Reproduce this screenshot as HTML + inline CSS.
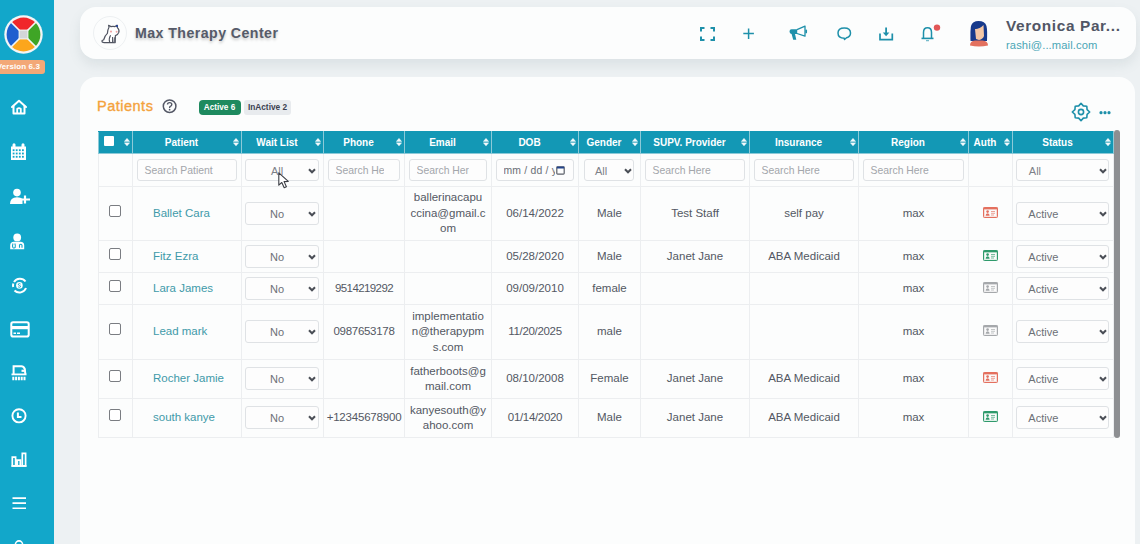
<!DOCTYPE html><html><head><meta charset="utf-8"><style>
*{box-sizing:border-box;margin:0;padding:0}
html,body{width:1140px;height:544px;overflow:hidden;background:#edf1f3;font-family:"Liberation Sans",sans-serif}
.a{position:absolute}
svg{position:absolute;overflow:visible}
#side{position:absolute;left:0;top:0;width:54px;height:544px;background:#12a7ca}
#hdr{position:absolute;left:80px;top:7px;width:1056px;height:52px;background:#fcfdfd;border-radius:16px;box-shadow:0 6px 12px rgba(100,120,130,0.13)}
#main{position:absolute;left:80px;top:76.5px;width:1055px;height:500px;background:#fcfdfd;border-radius:16px}
table{position:absolute;left:98px;top:131px;border-collapse:collapse;table-layout:fixed;width:1015px}
td,th{border:1px solid #eceef0;text-align:center;vertical-align:middle;font-size:11.5px;color:#535863;padding:0;line-height:15.5px}
th{background:#1398b5;color:#fff;font-weight:bold;font-size:10px;padding-right:11px;border-color:#8ccad8;border-top-color:#1398b5}
td.lk{color:#3f9aa9;text-align:left;padding-left:20px}
.inp{position:absolute;border:1px solid #dfe2e5;border-radius:3px;background:#fdfdfd;font-size:10.4px;color:#a3a6ab;line-height:22px;padding-left:6.5px;white-space:nowrap;overflow:hidden}
.sel{position:absolute;border:1px solid #dfe2e5;border-radius:3px;background:#fdfdfd;font-size:11px;color:#6c7077;line-height:21px;white-space:nowrap}
.cb{position:absolute;width:12px;height:12px;border:1.4px solid #7a7d82;border-radius:2px;background:#fff}
.txt{position:absolute;white-space:nowrap}
</style></head><body><div id="side"></div><div id="hdr"></div><div id="main"></div><svg style="left:4px;top:15px" width="39" height="39" viewBox="0 0 39 39">
<circle cx="19.5" cy="19.5" r="19.2" fill="#f2f5f6"/>
<path d="M19.5 19.5 L7.55 7.55 A16.9 16.9 0 0 1 31.45 7.55 Z" fill="#f0262a"/>
<path d="M19.5 19.5 L31.45 7.55 A16.9 16.9 0 0 1 31.45 31.45 Z" fill="#3fa526"/>
<path d="M19.5 19.5 L31.45 31.45 A16.9 16.9 0 0 1 7.55 31.45 Z" fill="#fca61c"/>
<path d="M19.5 19.5 L7.55 31.45 A16.9 16.9 0 0 1 7.55 7.55 Z" fill="#1f5fcf"/>
<path d="M7 7 L32 32 M32 7 L7 32" stroke="#f2f5f6" stroke-width="1.7"/>
<rect x="14.6" y="14.6" width="9.8" height="9.8" fill="#f2f5f6"/>
<rect x="15.6" y="15.6" width="7.8" height="7.8" fill="#d3d6d8"/>
</svg><div class="a" style="left:-6px;top:60px;width:51px;height:13.5px;background:#f3a877;border-radius:3px;color:#fff;font-weight:bold;font-size:8px;line-height:14px;text-align:right;padding-right:5px;letter-spacing:0.1px">Version 6.3</div><svg style="left:10px;top:99px" width="18" height="17" viewBox="0 0 18 17"><path d="M2 8 L9 1.8 L16 8" fill="none" stroke="#ffffff" stroke-width="2" stroke-linecap="round" stroke-linejoin="round"/><path d="M3.5 6.8 V14.5 H14.5 V6.8" fill="none" stroke="#ffffff" stroke-width="2" stroke-linejoin="round"/><path d="M7.2 14 V10 Q9 8.3 10.8 10 V14" fill="none" stroke="#ffffff" stroke-width="1.8"/></svg><svg style="left:10px;top:142px" width="17" height="19" viewBox="0 0 17 19"><path d="M1 4.5 H16 V18 H1 Z" fill="#ffffff"/><rect x="2.5" y="1.2" width="3" height="4.5" rx="1.5" fill="#ffffff"/><rect x="11.5" y="1.2" width="3" height="4.5" rx="1.5" fill="#ffffff"/><rect x="2.7" y="7.3" width="1.8" height="1.8" fill="#12a7ca"/><rect x="5.8" y="7.3" width="1.8" height="1.8" fill="#12a7ca"/><rect x="8.9" y="7.3" width="1.8" height="1.8" fill="#12a7ca"/><rect x="12.0" y="7.3" width="1.8" height="1.8" fill="#12a7ca"/><rect x="2.7" y="10.6" width="1.8" height="1.8" fill="#12a7ca"/><rect x="5.8" y="10.6" width="1.8" height="1.8" fill="#12a7ca"/><rect x="8.9" y="10.6" width="1.8" height="1.8" fill="#12a7ca"/><rect x="12.0" y="10.6" width="1.8" height="1.8" fill="#12a7ca"/><rect x="2.7" y="13.9" width="1.8" height="1.8" fill="#12a7ca"/><rect x="5.8" y="13.9" width="1.8" height="1.8" fill="#12a7ca"/><rect x="8.9" y="13.9" width="1.8" height="1.8" fill="#12a7ca"/><rect x="12.0" y="13.9" width="1.8" height="1.8" fill="#12a7ca"/></svg><svg style="left:9px;top:188px" width="23" height="17" viewBox="0 0 23 17"><circle cx="8" cy="4.6" r="3.8" fill="#ffffff"/><path d="M1 16 Q1 9.2 8 9.2 Q12 9.2 13.5 11 V16 Z" fill="#ffffff"/><path d="M16 7.5 V15.5 M12 11.5 H21" stroke="#ffffff" stroke-width="2.2"/></svg><svg style="left:9px;top:232px" width="17" height="18" viewBox="0 0 17 18"><circle cx="8.2" cy="5.4" r="3.9" fill="#ffffff"/><path d="M1.2 17.3 V13.5 Q1.2 9.8 5 9.8 H11.4 Q15.2 9.8 15.2 13.5 V17.3 Z" fill="#ffffff"/><path d="M4 11.5 Q3 14 4 15.6 Q5.2 16.6 6.2 15.4 Q6.8 13.6 5.8 11.5" fill="none" stroke="#12a7ca" stroke-width="1.1"/><path d="M10.5 15.8 V12.8 Q12.2 11.4 13 13.2 V15.8" fill="none" stroke="#12a7ca" stroke-width="1.1"/></svg><svg style="left:11px;top:277px" width="17" height="17" viewBox="0 0 17 17"><path d="M3 5 A7 7 0 0 1 14.5 4.5 M15 11 A7 7 0 0 1 3.5 13.5 M2.2 10 A7 7 0 0 1 2.3 6.5" fill="none" stroke="#ffffff" stroke-width="2"/><circle cx="8.4" cy="8.4" r="3.3" fill="#ffffff"/><path d="M9.6 7 Q8.3 6 7.3 7 Q7 8.2 8.4 8.4 Q9.9 8.7 9.5 9.8 Q8.5 10.8 7.1 9.8" fill="none" stroke="#12a7ca" stroke-width="0.9"/></svg><svg style="left:10px;top:321px" width="20" height="17" viewBox="0 0 20 17"><rect x="1.3" y="1.3" width="17.4" height="14.2" rx="1.8" fill="none" stroke="#ffffff" stroke-width="2"/><rect x="1.3" y="5" width="17.4" height="3.2" fill="#ffffff"/><rect x="3.5" y="11.5" width="2.5" height="1.5" fill="#ffffff"/><rect x="7" y="11.5" width="3" height="1.5" fill="#ffffff"/></svg><svg style="left:11px;top:364px" width="17" height="18" viewBox="0 0 17 18"><path d="M2.6 10 V2.3 H10.5 Q12.5 2.3 13.8 5 L14.3 10" fill="none" stroke="#ffffff" stroke-width="2"/><path d="M10.5 6.8 L13.5 6.8" stroke="#ffffff" stroke-width="2.2"/><rect x="0.5" y="9.5" width="15" height="1.8" fill="#ffffff"/><path d="M2.3 12.7 V16.2 M5.1 12.7 V16.2 M7.9 12.7 V16.2 M10.7 12.7 V16.2 M13.5 12.7 V16.2" stroke="#ffffff" stroke-width="2"/></svg><svg style="left:11px;top:408px" width="16" height="16" viewBox="0 0 16 16"><circle cx="8" cy="7.8" r="6.6" fill="none" stroke="#ffffff" stroke-width="1.9"/><path d="M6.9 4.6 V9 H10.5" fill="none" stroke="#ffffff" stroke-width="2"/></svg><svg style="left:11px;top:452px" width="16" height="15" viewBox="0 0 16 15"><path d="M1.3 5.2 H4.6 V13.8 H1.3 Z M6.3 8.2 H9.3 V13.8 H6.3 Z M11.3 1.3 H14.6 V13.8 H11.3 Z" fill="none" stroke="#ffffff" stroke-width="1.7"/><path d="M0.5 14 H15.5" stroke="#ffffff" stroke-width="1.7"/></svg><svg style="left:12px;top:496px" width="15" height="14" viewBox="0 0 15 14"><path d="M0.5 2.1 H14 M0.5 7.1 H14 M0.5 12.2 H14" stroke="#ffffff" stroke-width="1.6"/></svg><svg style="left:14px;top:539px" width="12" height="10" viewBox="0 0 12 10"><circle cx="5" cy="5.5" r="3.6" fill="none" stroke="#ffffff" stroke-width="1.6"/></svg><div class="a" style="left:93px;top:16px;width:34px;height:34px;border-radius:50%;border:1px solid #edf0f2;background:#fcfdfd"></div><svg style="left:100px;top:24px" width="21" height="21" viewBox="0 0 21 21">
<path d="M9 3.2 L8.6 1.3 L11 2.6 Q13 2.2 15 2.6 L17 1.2 L17.4 3.6 Q19.6 5.6 18.8 8.4 Q18 10.8 15.4 11.6 L15.2 18.6 L4.2 18.6 Q2 18.6 2 17.2 Q2 15.8 3.6 16 Q4.6 11.8 7.4 9.4 Q7.8 5.2 9 3.2 Z" fill="#fff" stroke="#505461" stroke-width="1.2" stroke-linejoin="round"/>
<path d="M9.8 18.6 Q8.4 14.6 10.6 11.2" fill="none" stroke="#505461" stroke-width="1.1"/>
<path d="M12.6 18.6 V13" fill="none" stroke="#505461" stroke-width="1.1"/>
<path d="M13.4 18.6 H15.2 V13 L14 13.4 Z" fill="#6b6f7a"/>
<circle cx="17" cy="2" r="1.1" fill="#1f3f9a"/>
<circle cx="11" cy="7.6" r="1.1" fill="#f2a7a7"/><circle cx="16.6" cy="7.8" r="1" fill="#f2a7a7"/>
</svg><div class="txt" style="left:135px;top:24px;font-size:14.2px;font-weight:bold;color:#565b69;letter-spacing:0.43px;text-shadow:0 2px 3px rgba(0,0,0,0.22);line-height:18px">Max Therapy Center</div><svg style="left:700px;top:27px" width="15" height="14" viewBox="0 0 15 14"><path d="M1 4.5 V1 H4.5 M10.5 1 H14 V4.5 M14 9.5 V13 H10.5 M4.5 13 H1 V9.5" fill="none" stroke="#1e90aa" stroke-width="2"/></svg><svg style="left:743px;top:27.5px" width="12" height="12" viewBox="0 0 12 12"><path d="M5.6 0.5 V11 M0.3 5.6 H10.9" fill="none" stroke="#1e90aa" stroke-width="1.5"/></svg><svg style="left:789px;top:25px" width="19" height="16" viewBox="0 0 19 16"><path d="M2.5 4.2 H8.2 V8.9 H6 L7.3 14.8 H4.2 L2.6 8.9 Q0.5 8.9 0.5 6.5 Q0.5 4.2 2.5 4.2 Z" fill="#1e90aa"/><path d="M8 4.6 L16 1.1 V11.2 L8 8.5" fill="none" stroke="#1e90aa" stroke-width="1.3" stroke-linejoin="round"/><path d="M17.2 5.4 V7.4" stroke="#1e90aa" stroke-width="1.7" stroke-linecap="round"/></svg><svg style="left:837px;top:27px" width="15" height="14" viewBox="0 0 15 14"><path d="M7.3 11.2 Q1 11.2 1 6 Q1 1 7.3 1 Q13.5 1 13.5 6 Q13.5 9.6 9.5 10.8 L7.5 12.5 Z" fill="none" stroke="#1e90aa" stroke-width="1.5" stroke-linejoin="round"/></svg><svg style="left:879px;top:27px" width="15" height="14" viewBox="0 0 15 14"><path d="M1 6.5 V12.7 H13.3 V6.5" fill="none" stroke="#1e90aa" stroke-width="1.7"/><path d="M7.1 0.5 V7" stroke="#1e90aa" stroke-width="1.8"/><path d="M3.8 5.5 L7.1 9.3 L10.4 5.5 Z" fill="#1e90aa"/></svg><svg style="left:921px;top:26px" width="20" height="16" viewBox="0 0 20 16"><path d="M2.5 12.2 V6.5 Q2.5 1.8 6.5 1.8 Q10.5 1.8 10.5 6.5 V12.2" fill="none" stroke="#1e90aa" stroke-width="1.5"/><path d="M0.5 12.4 H12.5" stroke="#1e90aa" stroke-width="1.6"/><path d="M5 14.6 H8" stroke="#1e90aa" stroke-width="1.3" opacity="0.6"/><circle cx="16" cy="1.6" r="3.2" fill="#e25757"/></svg><svg style="left:969px;top:20px" width="20" height="27" viewBox="0 0 20 27">
<path d="M1.5 21 Q1.2 10 2 6 Q3.5 1 9.5 1 Q16 1 17.5 6 Q18.5 11 18 21 Z" fill="#173a8c"/>
<path d="M6 9 Q11 9 14.5 5 L15 16 Q14 19 10 20 L7 19 Z" fill="#f3c7a6"/>
<path d="M2.5 10 Q7 9.5 13 5 L9 2.5 Q3 3 2.5 10Z" fill="#173a8c"/>
<path d="M1 25.5 Q1 21 6 20.5 L13.5 20.5 Q19 21 19 25.5 Q10 27.5 1 25.5 Z" fill="#e3715f"/>
</svg><div class="txt" style="left:1006px;top:16px;font-size:15.4px;font-weight:bold;color:#515665;letter-spacing:0.62px;line-height:19px">Veronica Par...</div><div class="txt" style="left:1006px;top:38px;font-size:11.2px;color:#4aa6b6;letter-spacing:0.1px;line-height:14px">rashi@...mail.com</div><div class="txt" style="left:97px;top:98px;font-size:14.5px;color:#f4a23c;letter-spacing:0.5px;line-height:16px;-webkit-text-stroke:0.35px #f4a23c">Patients</div><svg style="left:162px;top:99px" width="16" height="15" viewBox="0 0 16 15"><circle cx="7.6" cy="7.2" r="6.3" fill="none" stroke="#545866" stroke-width="1.5"/><path d="M5.5 5.6 Q5.5 3.6 7.6 3.6 Q9.8 3.6 9.8 5.5 Q9.8 6.8 8.3 7.4 Q7.6 7.8 7.6 8.9" fill="none" stroke="#545866" stroke-width="1.4"/><circle cx="7.6" cy="10.7" r="0.85" fill="#545866"/></svg><div class="a" style="left:198.5px;top:100px;width:42px;height:14.5px;background:#1e8a5f;border-radius:4px;color:#fff;font-weight:bold;font-size:8.2px;line-height:15.5px;text-align:center">Active 6</div><div class="a" style="left:244px;top:100px;width:47px;height:14.5px;background:#e8ebee;border-radius:3px;color:#3a3f50;font-weight:bold;font-size:8.3px;line-height:15.5px;text-align:center">InActive 2</div><svg style="left:1071px;top:102px" width="20" height="20" viewBox="0 0 20 20"><path d="M10 1.3 L12.3 3.9 L15.8 4.2 L16.1 7.7 L18.7 10 L16.1 12.3 L15.8 15.8 L12.3 16.1 L10 18.7 L7.7 16.1 L4.2 15.8 L3.9 12.3 L1.3 10 L3.9 7.7 L4.2 4.2 L7.7 3.9 Z" fill="none" stroke="#1e90aa" stroke-width="1.6" stroke-linejoin="round"/><circle cx="10" cy="10" r="2.6" fill="none" stroke="#1e90aa" stroke-width="1.6"/></svg><svg style="left:1099px;top:110px" width="13" height="5" viewBox="0 0 13 5"><circle cx="2" cy="2.7" r="1.6" fill="#1e90aa"/><circle cx="6" cy="2.7" r="1.6" fill="#1e90aa"/><circle cx="10" cy="2.7" r="1.6" fill="#1e90aa"/></svg><table><colgroup><col style="width:34px"><col style="width:109px"><col style="width:82px"><col style="width:81px"><col style="width:87px"><col style="width:87px"><col style="width:62px"><col style="width:109px"><col style="width:109px"><col style="width:110px"><col style="width:44px"><col style="width:101px"></colgroup><tr style="height:22px"><th></th><th>Patient</th><th>Wait List</th><th>Phone</th><th>Email</th><th>DOB</th><th>Gender</th><th>SUPV. Provider</th><th>Insurance</th><th>Region</th><th>Auth</th><th>Status</th></tr><tr style="height:33px"><td></td><td></td><td></td><td></td><td></td><td></td><td></td><td></td><td></td><td></td><td></td><td></td></tr><tr style="height:54px"><td></td><td class="lk">Ballet Cara</td><td></td><td></td><td>ballerinacapu<br>ccina@gmail.c<br>om</td><td>06/14/2022</td><td>Male</td><td>Test Staff</td><td>self pay</td><td>max</td><td></td><td></td></tr><tr style="height:32px"><td></td><td class="lk">Fitz Ezra</td><td></td><td></td><td></td><td>05/28/2020</td><td>Male</td><td>Janet Jane</td><td>ABA Medicaid</td><td>max</td><td></td><td></td></tr><tr style="height:32px"><td></td><td class="lk">Lara James</td><td></td><td><span style="letter-spacing:-0.6px">9514219292</span></td><td></td><td>09/09/2010</td><td>female</td><td></td><td></td><td>max</td><td></td><td></td></tr><tr style="height:55px"><td></td><td class="lk">Lead mark</td><td></td><td><span style="letter-spacing:-0.3px">0987653178</span></td><td>implementatio<br>n@therapypm<br>s.com</td><td><span style="letter-spacing:-0.33px">11/20/2025</span></td><td>male</td><td></td><td></td><td>max</td><td></td><td></td></tr><tr style="height:39px"><td></td><td class="lk">Rocher Jamie</td><td></td><td></td><td>fatherboots@g<br>mail.com</td><td>08/10/2008</td><td>Female</td><td>Janet Jane</td><td>ABA Medicaid</td><td>max</td><td></td><td></td></tr><tr style="height:39px"><td></td><td class="lk">south kanye</td><td></td><td><span style="letter-spacing:-0.2px">+12345678900</span></td><td>kanyesouth@y<br>ahoo.com</td><td><span style="letter-spacing:-0.33px">01/14/2020</span></td><td>Male</td><td>Janet Jane</td><td>ABA Medicaid</td><td>max</td><td></td><td></td></tr></table><div class="a" style="left:104px;top:135.5px;width:10px;height:10px;background:#fff;border-radius:1px"></div><svg style="left:124px;top:138.3px" width="6" height="8.5" viewBox="0 0 6 8.5"><path d="M0.2 3.5 L3 0.2 L5.8 3.5 Z M0.2 4.8 L3 8.1 L5.8 4.8 Z" fill="#fff" stroke="#fff" stroke-width="0.3" stroke-linejoin="round" opacity="0.95"/></svg><svg style="left:233px;top:138.3px" width="6" height="8.5" viewBox="0 0 6 8.5"><path d="M0.2 3.5 L3 0.2 L5.8 3.5 Z M0.2 4.8 L3 8.1 L5.8 4.8 Z" fill="#fff" stroke="#fff" stroke-width="0.3" stroke-linejoin="round" opacity="0.95"/></svg><svg style="left:315px;top:138.3px" width="6" height="8.5" viewBox="0 0 6 8.5"><path d="M0.2 3.5 L3 0.2 L5.8 3.5 Z M0.2 4.8 L3 8.1 L5.8 4.8 Z" fill="#fff" stroke="#fff" stroke-width="0.3" stroke-linejoin="round" opacity="0.95"/></svg><svg style="left:396px;top:138.3px" width="6" height="8.5" viewBox="0 0 6 8.5"><path d="M0.2 3.5 L3 0.2 L5.8 3.5 Z M0.2 4.8 L3 8.1 L5.8 4.8 Z" fill="#fff" stroke="#fff" stroke-width="0.3" stroke-linejoin="round" opacity="0.95"/></svg><svg style="left:483px;top:138.3px" width="6" height="8.5" viewBox="0 0 6 8.5"><path d="M0.2 3.5 L3 0.2 L5.8 3.5 Z M0.2 4.8 L3 8.1 L5.8 4.8 Z" fill="#fff" stroke="#fff" stroke-width="0.3" stroke-linejoin="round" opacity="0.95"/></svg><svg style="left:570px;top:138.3px" width="6" height="8.5" viewBox="0 0 6 8.5"><path d="M0.2 3.5 L3 0.2 L5.8 3.5 Z M0.2 4.8 L3 8.1 L5.8 4.8 Z" fill="#fff" stroke="#fff" stroke-width="0.3" stroke-linejoin="round" opacity="0.95"/></svg><svg style="left:632px;top:138.3px" width="6" height="8.5" viewBox="0 0 6 8.5"><path d="M0.2 3.5 L3 0.2 L5.8 3.5 Z M0.2 4.8 L3 8.1 L5.8 4.8 Z" fill="#fff" stroke="#fff" stroke-width="0.3" stroke-linejoin="round" opacity="0.95"/></svg><svg style="left:741px;top:138.3px" width="6" height="8.5" viewBox="0 0 6 8.5"><path d="M0.2 3.5 L3 0.2 L5.8 3.5 Z M0.2 4.8 L3 8.1 L5.8 4.8 Z" fill="#fff" stroke="#fff" stroke-width="0.3" stroke-linejoin="round" opacity="0.95"/></svg><svg style="left:850px;top:138.3px" width="6" height="8.5" viewBox="0 0 6 8.5"><path d="M0.2 3.5 L3 0.2 L5.8 3.5 Z M0.2 4.8 L3 8.1 L5.8 4.8 Z" fill="#fff" stroke="#fff" stroke-width="0.3" stroke-linejoin="round" opacity="0.95"/></svg><svg style="left:960px;top:138.3px" width="6" height="8.5" viewBox="0 0 6 8.5"><path d="M0.2 3.5 L3 0.2 L5.8 3.5 Z M0.2 4.8 L3 8.1 L5.8 4.8 Z" fill="#fff" stroke="#fff" stroke-width="0.3" stroke-linejoin="round" opacity="0.95"/></svg><svg style="left:1004px;top:138.3px" width="6" height="8.5" viewBox="0 0 6 8.5"><path d="M0.2 3.5 L3 0.2 L5.8 3.5 Z M0.2 4.8 L3 8.1 L5.8 4.8 Z" fill="#fff" stroke="#fff" stroke-width="0.3" stroke-linejoin="round" opacity="0.95"/></svg><svg style="left:1105px;top:138.3px" width="6" height="8.5" viewBox="0 0 6 8.5"><path d="M0.2 3.5 L3 0.2 L5.8 3.5 Z M0.2 4.8 L3 8.1 L5.8 4.8 Z" fill="#fff" stroke="#fff" stroke-width="0.3" stroke-linejoin="round" opacity="0.95"/></svg><div class="inp" style="left:137px;top:159px;width:99.5px;height:22px;">Search Patient</div><div class="sel" style="left:245.2px;top:159px;width:73.80000000000001px;height:22px"><div class="txt" style="left:0;width:61.80000000000001px;text-align:center;top:0.5px"><span style="color:#7d8188">All</span></div><svg style="left:62.30000000000001px;top:7.5px" width="8" height="6" viewBox="0 0 8 6"><path d="M1 1.2 L4 4.3 L7 1.2" fill="none" stroke="#4a4e56" stroke-width="2"/></svg></div><div class="inp" style="left:328px;top:159px;width:71.5px;height:22px;"><span style="display:inline-block;width:48.5px;overflow:hidden;vertical-align:top">Search Here</span></div><div class="inp" style="left:409px;top:159px;width:77.5px;height:22px;"><span style="display:inline-block;width:52.5px;overflow:hidden;vertical-align:top">Search Here</span></div><div class="inp" style="left:496px;top:159px;width:77.5px;height:22px;"><span style="color:#6a6e75;display:inline-block;width:51px;overflow:hidden;vertical-align:top;letter-spacing:0.2px">mm / dd / yyyy</span></div><div class="sel" style="left:583.9px;top:159px;width:50.30000000000007px;height:22px"><div class="txt" style="left:10px;top:0.5px"><span style="color:#7d8188">All</span></div><svg style="left:38.80000000000007px;top:7.5px" width="8" height="6" viewBox="0 0 8 6"><path d="M1 1.2 L4 4.3 L7 1.2" fill="none" stroke="#4a4e56" stroke-width="2"/></svg></div><div class="inp" style="left:645px;top:159px;width:99.5px;height:22px;">Search Here</div><div class="inp" style="left:754px;top:159px;width:99.5px;height:22px;">Search Here</div><div class="inp" style="left:863px;top:159px;width:100.5px;height:22px;">Search Here</div><div class="sel" style="left:1016.3px;top:159px;width:92.90000000000009px;height:22px"><div class="txt" style="left:11.5px;top:0.5px"><span style="color:#7d8188">All</span></div><svg style="left:81.40000000000009px;top:7.5px" width="8" height="6" viewBox="0 0 8 6"><path d="M1 1.2 L4 4.3 L7 1.2" fill="none" stroke="#4a4e56" stroke-width="2"/></svg></div><div class="cb" style="left:109px;top:204.5px"></div><div class="sel" style="left:245.2px;top:201.5px;width:73.80000000000001px;height:23px"><div class="txt" style="left:0;width:61.80000000000001px;text-align:center;top:1.0px">No</div><svg style="left:62.30000000000001px;top:8.0px" width="8" height="6" viewBox="0 0 8 6"><path d="M1 1.2 L4 4.3 L7 1.2" fill="none" stroke="#4a4e56" stroke-width="2"/></svg></div><div class="sel" style="left:1016.3px;top:201.5px;width:92.90000000000009px;height:23px"><div class="txt" style="left:11px;top:1.0px">Active</div><svg style="left:81.40000000000009px;top:8.0px" width="8" height="6" viewBox="0 0 8 6"><path d="M1 1.2 L4 4.3 L7 1.2" fill="none" stroke="#4a4e56" stroke-width="2"/></svg></div><div class="cb" style="left:109px;top:247.5px"></div><div class="sel" style="left:245.2px;top:244.5px;width:73.80000000000001px;height:23px"><div class="txt" style="left:0;width:61.80000000000001px;text-align:center;top:1.0px">No</div><svg style="left:62.30000000000001px;top:8.0px" width="8" height="6" viewBox="0 0 8 6"><path d="M1 1.2 L4 4.3 L7 1.2" fill="none" stroke="#4a4e56" stroke-width="2"/></svg></div><div class="sel" style="left:1016.3px;top:244.5px;width:92.90000000000009px;height:23px"><div class="txt" style="left:11px;top:1.0px">Active</div><svg style="left:81.40000000000009px;top:8.0px" width="8" height="6" viewBox="0 0 8 6"><path d="M1 1.2 L4 4.3 L7 1.2" fill="none" stroke="#4a4e56" stroke-width="2"/></svg></div><div class="cb" style="left:109px;top:279.5px"></div><div class="sel" style="left:245.2px;top:276.5px;width:73.80000000000001px;height:23px"><div class="txt" style="left:0;width:61.80000000000001px;text-align:center;top:1.0px">No</div><svg style="left:62.30000000000001px;top:8.0px" width="8" height="6" viewBox="0 0 8 6"><path d="M1 1.2 L4 4.3 L7 1.2" fill="none" stroke="#4a4e56" stroke-width="2"/></svg></div><div class="sel" style="left:1016.3px;top:276.5px;width:92.90000000000009px;height:23px"><div class="txt" style="left:11px;top:1.0px">Active</div><svg style="left:81.40000000000009px;top:8.0px" width="8" height="6" viewBox="0 0 8 6"><path d="M1 1.2 L4 4.3 L7 1.2" fill="none" stroke="#4a4e56" stroke-width="2"/></svg></div><div class="cb" style="left:109px;top:323.0px"></div><div class="sel" style="left:245.2px;top:320.0px;width:73.80000000000001px;height:23px"><div class="txt" style="left:0;width:61.80000000000001px;text-align:center;top:1.0px">No</div><svg style="left:62.30000000000001px;top:8.0px" width="8" height="6" viewBox="0 0 8 6"><path d="M1 1.2 L4 4.3 L7 1.2" fill="none" stroke="#4a4e56" stroke-width="2"/></svg></div><div class="sel" style="left:1016.3px;top:320.0px;width:92.90000000000009px;height:23px"><div class="txt" style="left:11px;top:1.0px">Active</div><svg style="left:81.40000000000009px;top:8.0px" width="8" height="6" viewBox="0 0 8 6"><path d="M1 1.2 L4 4.3 L7 1.2" fill="none" stroke="#4a4e56" stroke-width="2"/></svg></div><div class="cb" style="left:109px;top:370.0px"></div><div class="sel" style="left:245.2px;top:367.0px;width:73.80000000000001px;height:23px"><div class="txt" style="left:0;width:61.80000000000001px;text-align:center;top:1.0px">No</div><svg style="left:62.30000000000001px;top:8.0px" width="8" height="6" viewBox="0 0 8 6"><path d="M1 1.2 L4 4.3 L7 1.2" fill="none" stroke="#4a4e56" stroke-width="2"/></svg></div><div class="sel" style="left:1016.3px;top:367.0px;width:92.90000000000009px;height:23px"><div class="txt" style="left:11px;top:1.0px">Active</div><svg style="left:81.40000000000009px;top:8.0px" width="8" height="6" viewBox="0 0 8 6"><path d="M1 1.2 L4 4.3 L7 1.2" fill="none" stroke="#4a4e56" stroke-width="2"/></svg></div><div class="cb" style="left:109px;top:409.0px"></div><div class="sel" style="left:245.2px;top:406.0px;width:73.80000000000001px;height:23px"><div class="txt" style="left:0;width:61.80000000000001px;text-align:center;top:1.0px">No</div><svg style="left:62.30000000000001px;top:8.0px" width="8" height="6" viewBox="0 0 8 6"><path d="M1 1.2 L4 4.3 L7 1.2" fill="none" stroke="#4a4e56" stroke-width="2"/></svg></div><div class="sel" style="left:1016.3px;top:406.0px;width:92.90000000000009px;height:23px"><div class="txt" style="left:11px;top:1.0px">Active</div><svg style="left:81.40000000000009px;top:8.0px" width="8" height="6" viewBox="0 0 8 6"><path d="M1 1.2 L4 4.3 L7 1.2" fill="none" stroke="#4a4e56" stroke-width="2"/></svg></div><div class="a" style="left:1114px;top:130px;width:5.5px;height:308px;background:#8d8f92;border-radius:3px"></div><svg style="left:983px;top:206.5px" width="15" height="11" viewBox="0 0 15 11"><rect x="0.5" y="0.5" width="14" height="10" rx="0.8" fill="#f6d5cf" stroke="#e4705f" stroke-width="1"/><rect x="0.5" y="0.5" width="14" height="1.8" fill="#e4705f"/><rect x="1.8" y="2.8" width="11.4" height="6.6" fill="#fbfbfb"/><circle cx="4.6" cy="4.6" r="1.3" fill="#e4705f"/><path d="M2.6 8.8 Q2.6 6.2 4.6 6.2 Q6.6 6.2 6.6 8.8 Z" fill="#e4705f"/><path d="M8 4.5 H12 M8 6.3 H12 M8 8 H11" stroke="#e4705f" stroke-width="0.8" opacity="0.8"/></svg><svg style="left:983px;top:249.5px" width="15" height="11" viewBox="0 0 15 11"><rect x="0.5" y="0.5" width="14" height="10" rx="0.8" fill="#cfe9dc" stroke="#2f9a6c" stroke-width="1"/><rect x="0.5" y="0.5" width="14" height="1.8" fill="#2f9a6c"/><rect x="1.8" y="2.8" width="11.4" height="6.6" fill="#fbfbfb"/><circle cx="4.6" cy="4.6" r="1.3" fill="#2f9a6c"/><path d="M2.6 8.8 Q2.6 6.2 4.6 6.2 Q6.6 6.2 6.6 8.8 Z" fill="#2f9a6c"/><path d="M8 4.5 H12 M8 6.3 H12 M8 8 H11" stroke="#2f9a6c" stroke-width="0.8" opacity="0.8"/></svg><svg style="left:983px;top:281.5px" width="15" height="11" viewBox="0 0 15 11"><rect x="0.5" y="0.5" width="14" height="10" rx="0.8" fill="#e6e7e8" stroke="#a5a8ab" stroke-width="1"/><rect x="0.5" y="0.5" width="14" height="1.8" fill="#a5a8ab"/><rect x="1.8" y="2.8" width="11.4" height="6.6" fill="#fbfbfb"/><circle cx="4.6" cy="4.6" r="1.3" fill="#a5a8ab"/><path d="M2.6 8.8 Q2.6 6.2 4.6 6.2 Q6.6 6.2 6.6 8.8 Z" fill="#a5a8ab"/><path d="M8 4.5 H12 M8 6.3 H12 M8 8 H11" stroke="#a5a8ab" stroke-width="0.8" opacity="0.8"/></svg><svg style="left:983px;top:325.0px" width="15" height="11" viewBox="0 0 15 11"><rect x="0.5" y="0.5" width="14" height="10" rx="0.8" fill="#e6e7e8" stroke="#a5a8ab" stroke-width="1"/><rect x="0.5" y="0.5" width="14" height="1.8" fill="#a5a8ab"/><rect x="1.8" y="2.8" width="11.4" height="6.6" fill="#fbfbfb"/><circle cx="4.6" cy="4.6" r="1.3" fill="#a5a8ab"/><path d="M2.6 8.8 Q2.6 6.2 4.6 6.2 Q6.6 6.2 6.6 8.8 Z" fill="#a5a8ab"/><path d="M8 4.5 H12 M8 6.3 H12 M8 8 H11" stroke="#a5a8ab" stroke-width="0.8" opacity="0.8"/></svg><svg style="left:983px;top:372.0px" width="15" height="11" viewBox="0 0 15 11"><rect x="0.5" y="0.5" width="14" height="10" rx="0.8" fill="#f6d5cf" stroke="#e4705f" stroke-width="1"/><rect x="0.5" y="0.5" width="14" height="1.8" fill="#e4705f"/><rect x="1.8" y="2.8" width="11.4" height="6.6" fill="#fbfbfb"/><circle cx="4.6" cy="4.6" r="1.3" fill="#e4705f"/><path d="M2.6 8.8 Q2.6 6.2 4.6 6.2 Q6.6 6.2 6.6 8.8 Z" fill="#e4705f"/><path d="M8 4.5 H12 M8 6.3 H12 M8 8 H11" stroke="#e4705f" stroke-width="0.8" opacity="0.8"/></svg><svg style="left:983px;top:411.0px" width="15" height="11" viewBox="0 0 15 11"><rect x="0.5" y="0.5" width="14" height="10" rx="0.8" fill="#cfe9dc" stroke="#2f9a6c" stroke-width="1"/><rect x="0.5" y="0.5" width="14" height="1.8" fill="#2f9a6c"/><rect x="1.8" y="2.8" width="11.4" height="6.6" fill="#fbfbfb"/><circle cx="4.6" cy="4.6" r="1.3" fill="#2f9a6c"/><path d="M2.6 8.8 Q2.6 6.2 4.6 6.2 Q6.6 6.2 6.6 8.8 Z" fill="#2f9a6c"/><path d="M8 4.5 H12 M8 6.3 H12 M8 8 H11" stroke="#2f9a6c" stroke-width="0.8" opacity="0.8"/></svg><svg style="left:556px;top:166px" width="9" height="9" viewBox="0 0 9 9"><rect x="0.8" y="0.9" width="7.4" height="7.2" rx="0.8" fill="none" stroke="#5b5f68" stroke-width="1.2"/><rect x="0.8" y="0.6" width="7.4" height="1.9" fill="#23448c"/></svg><svg style="left:277.5px;top:171.5px" width="12" height="17" viewBox="0 0 12 17"><path d="M0.8 0.8 L0.8 13.2 L3.8 10.5 L6.2 15.8 L8.4 14.8 L6.1 9.6 L10.3 9.4 Z" fill="#fff" stroke="#3a3d44" stroke-width="1.1" stroke-linejoin="round"/></svg></body></html>
